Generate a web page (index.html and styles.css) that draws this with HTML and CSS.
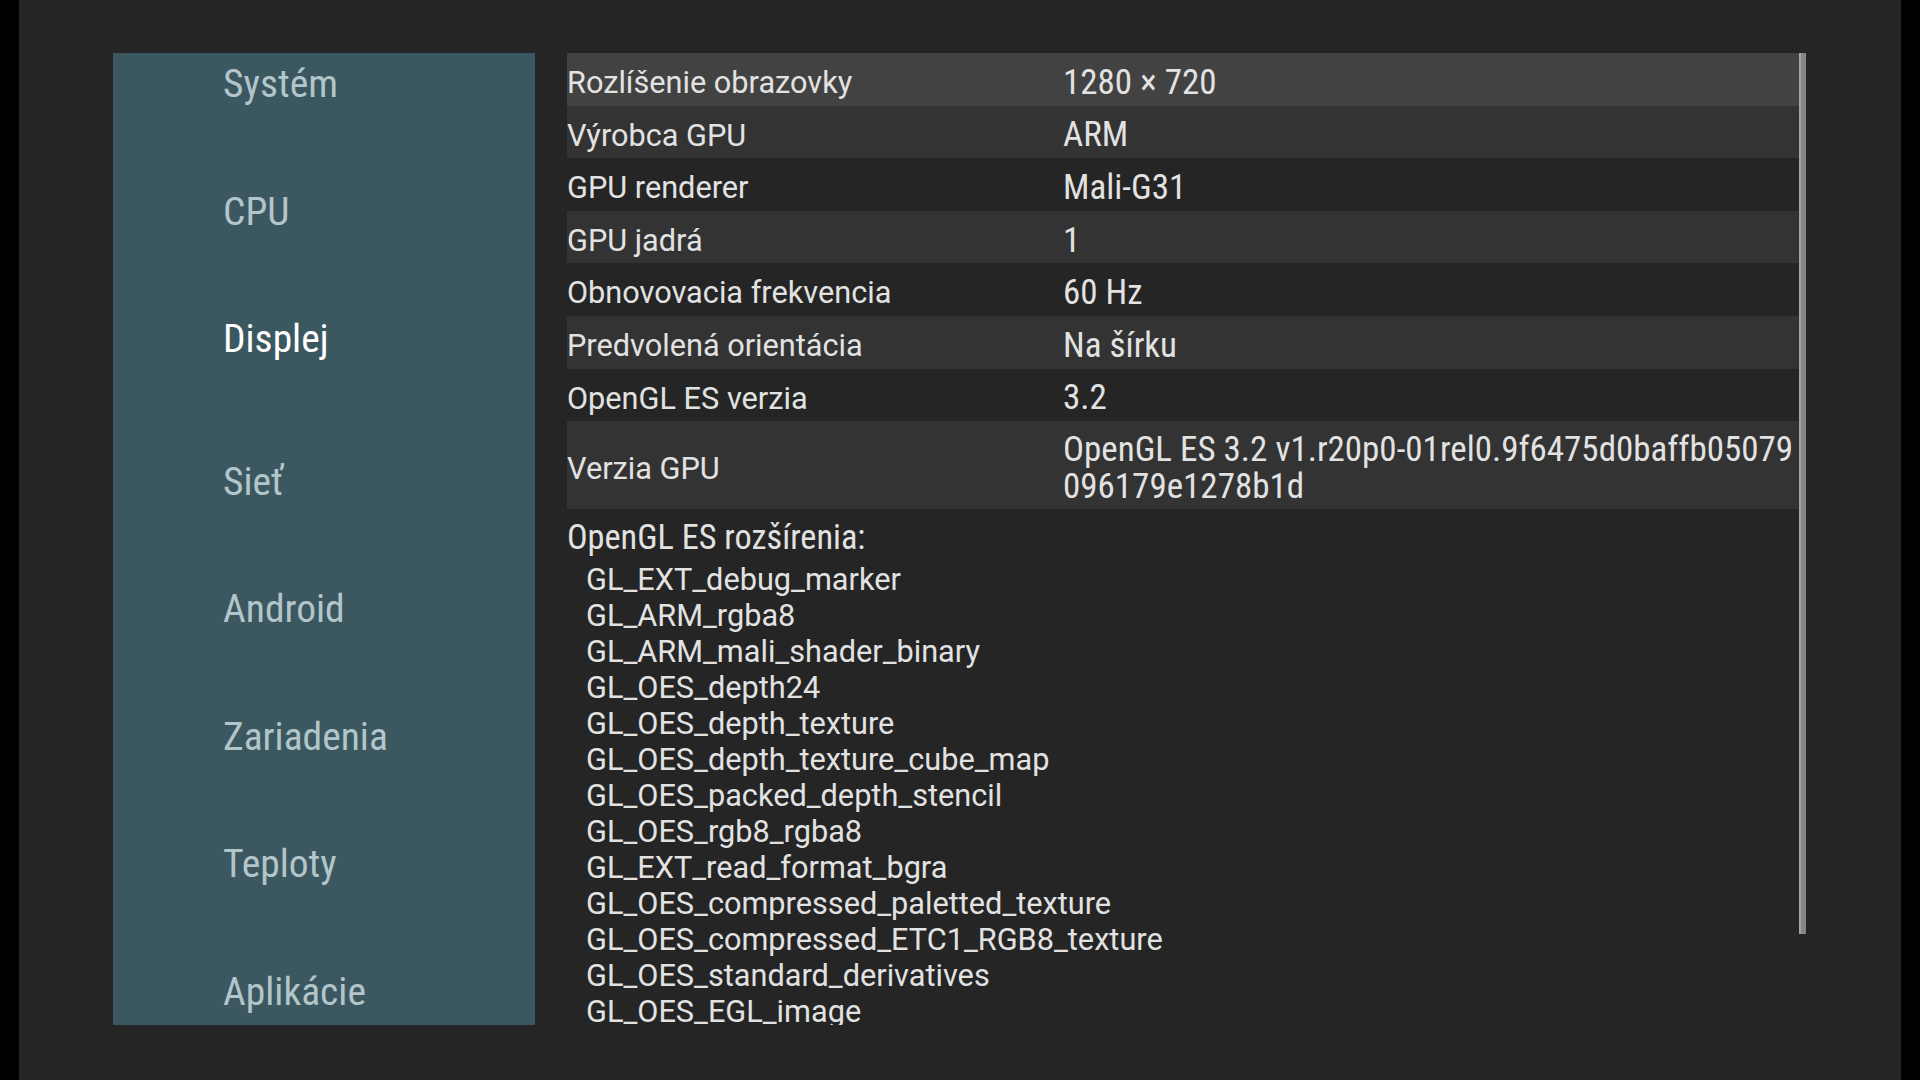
FILE: index.html
```html
<!doctype html>
<html>
<head>
  <meta charset="utf-8">
  <link rel="stylesheet" href="styles.css">
</head>
<body>
  <div class="screen">
    <div class="sidebar">
      <div class="menu">
        <div class="item">Systém</div>
        <div class="item">CPU</div>
        <div class="item selected">Displej</div>
        <div class="item">Sieť</div>
        <div class="item">Android</div>
        <div class="item">Zariadenia</div>
        <div class="item">Teploty</div>
        <div class="item">Aplikácie</div>
      </div>
    </div>

    <div class="pane">
      <div class="info">
        <div class="row focused">
          <div class="label">Rozlíšenie obrazovky</div>
          <div class="value">1280 × 720</div>
        </div>
        <div class="row">
          <div class="label">Výrobca GPU</div>
          <div class="value">ARM</div>
        </div>
        <div class="row">
          <div class="label">GPU renderer</div>
          <div class="value">Mali-G31</div>
        </div>
        <div class="row">
          <div class="label">GPU jadrá</div>
          <div class="value">1</div>
        </div>
        <div class="row">
          <div class="label">Obnovovacia frekvencia</div>
          <div class="value">60 Hz</div>
        </div>
        <div class="row">
          <div class="label">Predvolená orientácia</div>
          <div class="value">Na šírku</div>
        </div>
        <div class="row">
          <div class="label">OpenGL ES verzia</div>
          <div class="value">3.2</div>
        </div>
        <div class="row">
          <div class="label">Verzia GPU</div>
          <div class="value">OpenGL ES 3.2 v1.r20p0-01rel0.9f6475d0baffb05079<br>096179e1278b1d</div>
        </div>

        <div class="extensions">
          <div class="ext-title">OpenGL ES rozšírenia:</div>
          <ul class="ext-list">
            <li>GL_EXT_debug_marker</li>
            <li>GL_ARM_rgba8</li>
            <li>GL_ARM_mali_shader_binary</li>
            <li>GL_OES_depth24</li>
            <li>GL_OES_depth_texture</li>
            <li>GL_OES_depth_texture_cube_map</li>
            <li>GL_OES_packed_depth_stencil</li>
            <li>GL_OES_rgb8_rgba8</li>
            <li>GL_EXT_read_format_bgra</li>
            <li>GL_OES_compressed_paletted_texture</li>
            <li>GL_OES_compressed_ETC1_RGB8_texture</li>
            <li>GL_OES_standard_derivatives</li>
            <li>GL_OES_EGL_image</li>
          </ul>
        </div>
      </div>
      <div class="scrollbar"></div>
    </div>
  </div>
</body>
</html>
```

FILE: styles.css
```css
body{
  margin: 0;
  background-color: #000000;
  font-family: Roboto, "Noto Sans", sans-serif;
}
.screen{
  display: flex;
  gap: 32px;
  box-sizing: border-box;
  width: 1882px;
  height: 1080px;
  margin-left: 19px;
  padding: 53px 0 0 94px;
  background-color: #252525;
}

/* left menu */
.sidebar{
  width: 422px;
  height: 972px;
  background-color: #3b5860;
  overflow: hidden;
}
.menu{
  margin-top: -33px;
}
.item{
  display: flex;
  align-items: center;
  height: 127.5px;
  padding-left: 110px;
  font-family: "Roboto Condensed", Roboto, sans-serif;
  font-size: 39.5px;
  line-height: 1;
  color: #b2c6ca;
}
.item.selected{
  margin-bottom: 15px;
  color: #ffffff;
}

/* right pane */
.pane{
  display: flex;
  width: 1239px;
  height: 972px;
}
.info{
  width: 1232px;
  height: 972px;
  overflow: hidden;
  color: #e2e2e2;
  font-size: 30.7px;
}
.row{
  display: flex;
  align-items: center;
  box-sizing: border-box;
  min-height: 52.6px;
  padding: 11px 0 3.6px 0;
  line-height: 36px;
}
.row:nth-child(even){
  background-color: #333333;
}
.row.focused{
  background-color: #424242;
}
.label{
  width: 496px;
  flex-shrink: 0;
}
.value{
  font-family: "Roboto Condensed", Roboto, sans-serif;
  font-size: 35px;
  line-height: 36.5px;
}
.extensions{
  padding-top: 10px;
}
.ext-title{
  line-height: 36px;
  font-family: "Roboto Condensed", Roboto, sans-serif;
  font-size: 34.3px;
}
.ext-list{
  list-style: none;
  margin: 7px 0 0 0;
  padding: 0 0 0 19px;
  line-height: 36px;
}
.scrollbar{
  width: 7px;
  height: 881px;
  box-sizing: border-box;
  background-color: #868686;
  border-left: 2px solid #a4a4a4;
}
```
